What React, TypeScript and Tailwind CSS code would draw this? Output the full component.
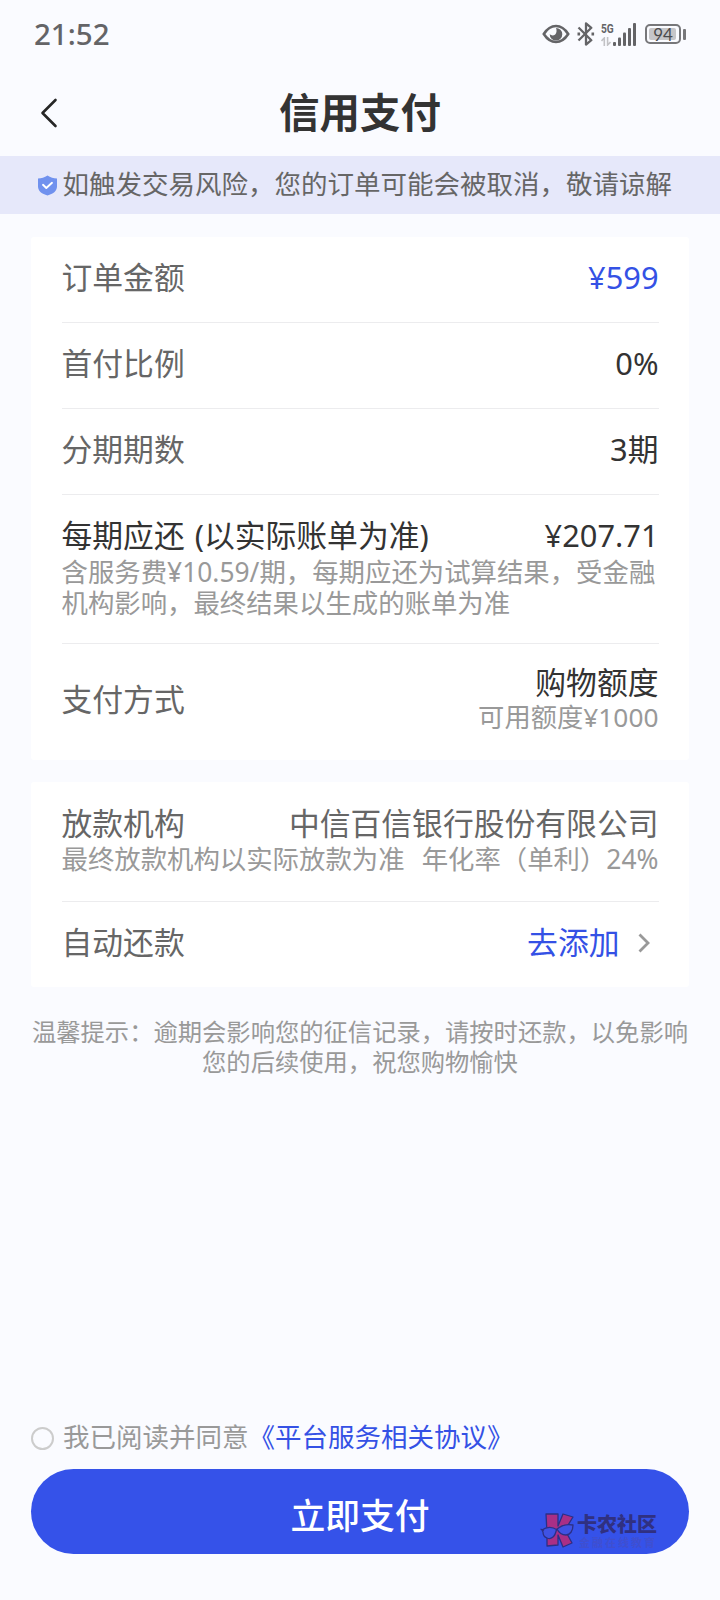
import type { ReactNode } from 'react';

function StatusIcons() {
  return (
    <div className="flex items-center">
      {/* Eye comfort */}
      <svg className="h-[20px] w-[28px]" viewBox="0 0 28 20" fill="none">
        <path d="M1.800 10C5.500 4.200 9.500 2 14 2S22.500 4.200 26.200 10C22.500 15.800 18.500 18 14 18S5.500 15.800 1.800 10Z" stroke="#646467" strokeWidth="2.600" />
        <path d="M14 4a6.300 6.300 0 1 1-6.300 6.300c1.500 1.500 4 1.500 5.500 0.200S15 6 14 4Z" fill="#646467" />
      </svg>
      {/* Bluetooth */}
      <svg className="ml-[7px] h-[24px] w-[18px]" viewBox="0 0 18 24" fill="none" stroke="#646467" strokeWidth="2.300" strokeLinejoin="round">
        <path d="M1.500 5.500L14.300 18.200L9 22.600V1.400L14.300 5.800L1.500 18.500" />
        <path d="M0.500 12h2.600M14.500 12h2.600" strokeWidth="2.800" />
      </svg>
      {/* Mobile signal */}
      <div className="ml-[6px] flex h-[24px] items-end">
        <div className="flex h-[24px] w-[12px] flex-col justify-between">
          <span className="origin-left scale-x-[0.78] font-[Roboto] text-[13px] leading-[13px] font-bold text-[#646467]">5G</span>
          <svg className="h-[9px] w-[10px]" viewBox="0 0 10 9" fill="none" stroke="#c2c2c5" strokeWidth="1.600">
            <path d="M0.500 4L3.300 1V9M6.600 0V8L9.500 5" />
          </svg>
        </div>
        <svg className="h-[23px] w-[23px]" viewBox="0 0 23 23" fill="#646467">
          <rect x="0" y="19" width="3" height="4" rx="1" />
          <rect x="5" y="14.500" width="3" height="8.500" rx="1" />
          <rect x="10" y="9.500" width="3" height="13.500" rx="1" />
          <rect x="15" y="5" width="3" height="18" rx="1" />
          <rect x="20" y="0" width="3" height="23" rx="1" />
        </svg>
      </div>
      {/* Battery */}
      <div className="ml-[9px] flex items-center">
        <div className="h-[20px] w-[36px] rounded-[5px] border-2 border-[#77777a] p-[2px]">
          <div className="flex h-[12px] w-[27px] items-center justify-center rounded-[2px] bg-[#c6c6c9] pl-[1px] font-[Lato] text-[17px] leading-none text-[#4b4b4e]">
            94
          </div>
        </div>
        <div className="ml-[2px] h-[11px] w-[3px] rounded-[1px] bg-[#77777a]" />
      </div>
    </div>
  );
}

function Row({ label, children }: { label: string; children: ReactNode }) {
  return (
    <div className="flex h-[86px] items-center justify-between border-b border-[#ececee] pb-[6px]">
      <span className="text-[#666666]">{label}</span>
      {children}
    </div>
  );
}

function Watermark() {
  return (
    <div className="absolute top-[43px] right-[32px] flex items-start">
      <svg className="mt-[1px] h-[36px] w-[35px]" viewBox="0 0 35 36" stroke="#2c2f86" strokeWidth="1.300" strokeLinejoin="round">
        <path d="M6 1H18V13L23 1L33 4L25 17L32 30L23 34L18 22V32L7 33V20Z" fill="#a92f86" />
        <path d="M2 17C7 13 13 14 16.500 16.500C15 24 11 27 7 25C4 24 3 21 3 19Z" fill="#3f52e4" />
        <path d="M17 16C22 12 28 11 33 12C33 18 30 22 26 22C21 22 19 20 17 16Z" fill="#3f52e4" />
        <path d="M0.500 16L4 17.500" />
      </svg>
      <div className="ml-[2px] flex flex-col">
        <span className="text-[20px] leading-[25px] font-black text-[#303081]">卡农社区</span>
        <span className="pl-[2px] text-[11px] leading-[12px] font-bold tracking-[2px] text-[#3f4fd0]">金融在线教育</span>
      </div>
    </div>
  );
}

export default function App() {
  return (
    <div className="flex h-[1600px] w-[720px] flex-col overflow-hidden bg-[#fafbff] font-['Noto_Sans','Noto_Sans_CJK_SC',sans-serif] whitespace-nowrap">
      {/* Status bar */}
      <div className="flex h-[68px] items-center justify-between pr-[34px] pl-[34px]">
        <span className="text-[29.500px] leading-none font-medium text-[#646467]">21:52</span>
        <StatusIcons />
      </div>

      {/* Title bar */}
      <header className="grid h-[88px] grid-cols-[72px_1fr_72px] items-center">
        <button className="pt-[2px] pl-[40px]" aria-label="返回">
          <svg className="h-[30px] w-[18px]" viewBox="0 0 18 30" fill="none" stroke="#262626" strokeWidth="2.600" strokeLinecap="round" strokeLinejoin="round">
            <path d="M15.500 2L2.500 15L15.500 28" />
          </svg>
        </button>
        <h1 className="pt-[2px] text-center text-[40.500px] leading-none font-bold text-[#333333]">信用支付</h1>
      </header>

      {/* Risk notice */}
      <div className="flex h-[58px] items-center bg-[#e6e8fa] pl-[37px]">
        <svg className="h-[21px] w-[21px]" viewBox="0 0 21 21" fill="none">
          <path d="M10.500 0.500C13.500 2.700 16.500 3.200 20 3.500V11.500C20 16 16 19 10.500 20.500C5 19 1 16 1 11.500V3.500C4.500 3.200 7.500 2.700 10.500 0.500Z" fill="#7091ee" />
          <path d="M6 9.800L9.300 13L15 7.800" stroke="#fff" strokeWidth="1.900" strokeLinecap="round" strokeLinejoin="round" />
        </svg>
        <p className="-mt-[2px] ml-[4.500px] text-[26.500px] leading-none text-[#666666]">如触发交易风险，您的订单可能会被取消，敬请谅解</p>
      </div>

      {/* Order details */}
      <section className="mx-[31px] mt-[23px] h-[523px] rounded-[3px] bg-white px-[30.500px] text-[30.800px] leading-[36px] text-[#333333]">
        <Row label="订单金额">
          <span className="text-[#3451e5]">¥599</span>
        </Row>
        <Row label="首付比例">
          <span>0%</span>
        </Row>
        <Row label="分期期数">
          <span>3期</span>
        </Row>
        <div className="h-[149px] border-b border-[#ececee] pt-[22px]">
          <div className="flex justify-between">
            <span className="[word-spacing:2px]">每期应还 (以实际账单为准)</span>
            <span>¥207.71</span>
          </div>
          <p className="mt-[4px] text-[26.400px] leading-[31px] text-[#999999]">
            含服务费¥10.59/期，每期应还为试算结果，受金融
            <br />
            机构影响，最终结果以生成的账单为准
          </p>
        </div>
        <div className="flex h-[110px] items-center justify-between">
          <span className="text-[#666666]">支付方式</span>
          <div className="flex flex-col items-end">
            <span>购物额度</span>
            <span className="text-[26.300px] leading-[34px] text-[#999999]">可用额度¥1000</span>
          </div>
        </div>
      </section>

      {/* Lender */}
      <section className="mx-[31px] mt-[22px] h-[205px] rounded-[3px] bg-white px-[30.500px] text-[30.800px] leading-[36px] text-[#666666]">
        <div className="h-[120px] border-b border-[#ececee] pt-[23px]">
          <div className="flex justify-between">
            <span>放款机构</span>
            <span>中信百信银行股份有限公司</span>
          </div>
          <div className="flex justify-between text-[26.400px] leading-[36px] text-[#999999]">
            <span>最终放款机构以实际放款为准</span>
            <span>年化率（单利）24%</span>
          </div>
        </div>
        <div className="flex h-[79px] items-center justify-between">
          <span>自动还款</span>
          <button className="flex items-center text-[#3451e5]">
            去添加
            <svg className="mt-[2px] mr-[9px] ml-[18px] h-[20px] w-[12px]" viewBox="0 0 12 20" fill="none" stroke="#999999" strokeWidth="2.800">
              <path d="M1.500 1.500L10 10L1.500 18.500" />
            </svg>
          </button>
        </div>
      </section>

      <p className="mt-[30px] text-center text-[24.300px] leading-[30px] text-[#999999]">
        温馨提示：逾期会影响您的征信记录，请按时还款，以免影响
        <br />
        您的后续使用，祝您购物愉快
      </p>

      {/* Agreement and submit */}
      <footer className="mx-[31px] mt-auto mb-[46px]">
        <div className="flex h-[36px] items-center text-[26.500px] leading-none">
          <span className="-mt-[2px] h-[23px] w-[23px] rounded-full border-2 border-[#cccccc]" />
          <span className="-mt-[3px] ml-[9px] text-[#999999]">我已阅读并同意</span>
          <a className="-mt-[3px] text-[#3451e5]">《平台服务相关协议》</a>
        </div>
        <button className="relative mt-[12px] flex h-[85px] w-full items-center justify-center rounded-full bg-[#3552e9] pt-[10px] text-[34.800px] leading-none font-medium text-white">
          立即支付
          <Watermark />
        </button>
      </footer>
    </div>
  );
}
